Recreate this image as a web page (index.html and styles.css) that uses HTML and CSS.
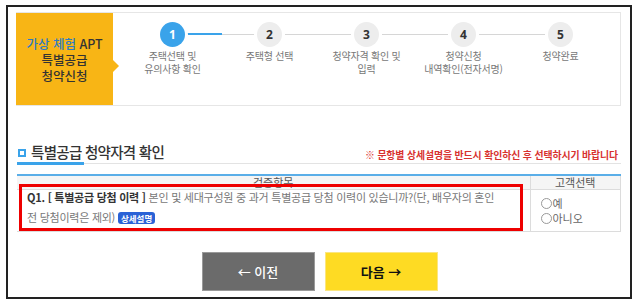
FILE: index.html
```html
<!DOCTYPE html>
<html lang="ko">
<head>
<meta charset="utf-8">
<link rel="stylesheet" href="styles.css">
</head>
<body>
<div class="frame">
  <div class="head-box">
    <div class="brand">
      <div><span class="blue">가상 체험</span> APT</div>
      <div>특별공급</div>
      <div>청약신청</div>
      <span class="brand-arrow"></span>
    </div>
    <ol class="steps">
      <li class="step active"><span class="num">1</span><span class="lbl">주택선택 및<br>유의사항 확인</span></li>
      <li class="step half"><span class="num">2</span><span class="lbl">주택형 선택</span></li>
      <li class="step"><span class="num">3</span><span class="lbl">청약자격 확인 및<br>입력</span></li>
      <li class="step"><span class="num">4</span><span class="lbl">청약신청<br>내역확인(전자서명)</span></li>
      <li class="step"><span class="num">5</span><span class="lbl">청약완료</span></li>
    </ol>
  </div>

  <div class="sec-row">
    <h2 class="sec-title"><span class="sq"></span>특별공급 청약자격 확인</h2>
    <p class="notice">※ 문항별 상세설명을 반드시 확인하신 후 선택하시기 바랍니다</p>
  </div>
  <div class="sec-line"><span class="bar"></span><span class="rest"></span></div>

  <div class="tbl-wrap">
    <table class="tbl">
      <thead>
        <tr><th class="c1">검증항목</th><th class="c2">고객선택</th></tr>
      </thead>
      <tbody>
        <tr>
          <td class="q">
            <span class="l1"><b>Q1. [ 특별공급 당첨 이력 ]</b> 본인 및 세대구성원 중 과거 특별공급 당첨 이력이 있습니까?(단, 배우자의 혼인</span>
            <span class="l2">전 당첨이력은 제외) <span class="badge">상세설명</span></span>
          </td>
          <td class="opts">
            <label class="opt"><span class="radio"></span>예</label>
            <label class="opt"><span class="radio"></span>아니오</label>
          </td>
        </tr>
      </tbody>
    </table>
    <div class="highlight"></div>
  </div>

  <div class="btns">
    <button class="btn prev">← 이전</button>
    <button class="btn next">다음 →</button>
  </div>
</div>
</body>
</html>
```

FILE: styles.css
```css
* { box-sizing: border-box; }
html, body { margin: 0; padding: 0; background: #fff; }
body {
  font-family: "Noto Sans CJK KR", "Noto Sans", sans-serif;
  color: #333;
  width: 640px;
  height: 304px;
  overflow: hidden;
}
.frame {
  margin: 5px 0 0 6px;
  width: 626px;
  height: 294px;
  border: 2px solid #222;
  padding: 5px 9px 0 8px;
}
.head-box {
  display: flex;
  height: 94px;
  border: 1px solid #e6e6e6;
  border-left: none;
}
.brand {
  position: relative;
  width: 97px;
  background: #f8b515;
  display: flex;
  flex-direction: column;
  justify-content: center;
  align-items: center;
  font-size: 12.5px;
  line-height: 16px;
  font-weight: 500;
  color: #333;
  padding-top: 2px;
}
.brand .blue { color: #2e7cc0; }
.brand-arrow {
  position: absolute;
  right: -6px;
  top: 47px;
  border-left: 6px solid #f8b515;
  border-top: 6px solid transparent;
  border-bottom: 6px solid transparent;
}
.steps {
  list-style: none;
  margin: 0;
  padding: 9px 0 0 11px;
  display: grid;
  grid-template-columns: repeat(5, 97px);
  align-items: start;
}
.step {
  position: relative;
  display: flex;
  flex-direction: column;
  align-items: center;
}
.step + .step::before {
  content: "";
  position: absolute;
  left: -50%;
  width: 100%;
  top: 12px;
  height: 1px;
  background: #d6d6d6;
}
.step.half::before {
  top: 11px;
  height: 2px;
  background: linear-gradient(to right, #3aa3ea 50%, transparent 50%), linear-gradient(to bottom, transparent 50%, #d6d6d6 50%);
}
.num {
  position: relative;
  z-index: 1;
  width: 25px;
  height: 25px;
  border-radius: 50%;
  background: #ededed;
  box-shadow: 0 0 0 3px #fff;
  display: flex;
  align-items: center;
  justify-content: center;
  font-family: "Noto Sans", sans-serif;
  font-weight: 700;
  font-size: 12px;
  color: #333;
}
.active .num { background: #3aa3ea; color: #fff; }
.lbl {
  margin-top: 2px;
  font-size: 10px;
  line-height: 13px;
  color: #777;
  text-align: center;
  white-space: nowrap;
  letter-spacing: -0.2px;
}
.sec-row {
  margin-top: 36px;
  height: 20px;
  display: flex;
  justify-content: space-between;
  align-items: flex-end;
}
.sec-title {
  margin: 0;
  font-size: 14.5px;
  line-height: 20px;
  font-weight: 500;
  color: #333;
  letter-spacing: -0.7px;
  display: flex;
  align-items: center;
  padding-left: 2px;
}
.sq {
  width: 8px;
  height: 8px;
  border: 2px solid #3aa3ea;
  margin-right: 5px;
  margin-top: 2px;
}
.notice {
  margin: 0 3px 0 0;
  font-size: 9.9px;
  line-height: 14px;
  font-weight: 700;
  color: #d8322f;
  letter-spacing: -0.1px;
}
.sec-line {
  display: flex;
  align-items: center;
  height: 3px;
}
.sec-line .bar { width: 67px; height: 3px; background: #3aa3ea; margin-left: 1px; }
.sec-line .rest { flex: 1; height: 1px; background: #e3e3e3; }
.tbl-wrap {
  position: relative;
  margin-top: 9px;
  padding-left: 1px;
}
.tbl {
  width: 604px;
  border-collapse: collapse;
  border-top: 2px solid #5aaee8;
  font-size: 11px;
}
.tbl th {
  height: 13px;
  padding: 0;
  background: #f5f5f5;
  font-weight: 400;
  color: #555;
  font-size: 11px;
  line-height: 13px;
  border-bottom: 1px solid #dcdcdc;
}
.tbl .c1 { width: 513px; border-right: 1px solid #dcdcdc; }
.tbl .c2 { border-right: 1px solid #dcdcdc; }
.tbl td {
  height: 42px;
  border-bottom: 1px solid #dcdcdc;
  vertical-align: top;
}
.q {
  border-right: 1px solid #dcdcdc;
  padding: 0 0 0 10px;
  color: #777;
  letter-spacing: -0.25px;
  white-space: nowrap;
}
.q .l1 { display: block; line-height: 14px; }
.q .l2 { display: block; line-height: 14px; margin-top: 6px; }
.q b { color: #333; font-weight: 700; }
.badge {
  display: inline-block;
  background: #2a62d6;
  color: #fff;
  font-weight: 700;
  font-size: 8.5px;
  line-height: 12px;
  padding: 0 3px;
  border-radius: 3px;
  vertical-align: 0;
  letter-spacing: 0;
}
.opts {
  border-right: 1px solid #dcdcdc;
  padding: 6px 0 0 10px;
}
.opt {
  display: flex;
  align-items: center;
  font-size: 11px;
  line-height: 15px;
  color: #666;
}
.radio {
  width: 11px;
  height: 11px;
  border: 1px solid #999;
  border-radius: 50%;
  margin-right: 1px;
}
.highlight {
  position: absolute;
  left: 3px;
  top: 10px;
  width: 504px;
  height: 47px;
  border: 3px solid #ee0000;
}
.btns {
  margin-top: 20px;
  display: flex;
  justify-content: center;
  gap: 10px;
  padding-left: 2px;
}
.btn {
  width: 113px;
  height: 39px;
  border: 1px solid #d8d8d8;
  font-family: "Noto Sans CJK KR", sans-serif;
  font-size: 13px;
  font-weight: 700;
}
.prev { background: #6b6b6b; color: #fff; border-color: #9a9a9a; font-weight: 500; }
.next { background: #fedb23; color: #111; border-color: #fbe680; }
```
